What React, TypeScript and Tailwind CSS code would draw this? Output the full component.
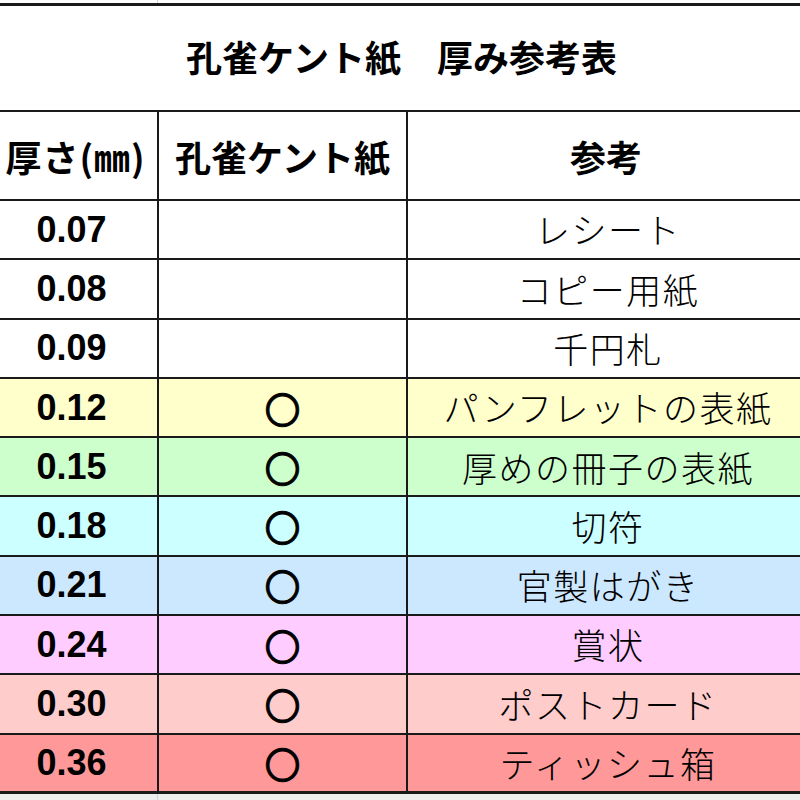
const rows = [
  { t: "0.07", ok: false, note: "レシート", bg: "bg-white" },
  { t: "0.08", ok: false, note: "コピー用紙", bg: "bg-white" },
  { t: "0.09", ok: false, note: "千円札", bg: "bg-white" },
  { t: "0.12", ok: true, note: "パンフレットの表紙", bg: "bg-[#ffffcc]" },
  { t: "0.15", ok: true, note: "厚めの冊子の表紙", bg: "bg-[#ccffcc]" },
  { t: "0.18", ok: true, note: "切符", bg: "bg-[#ccffff]" },
  { t: "0.21", ok: true, note: "官製はがき", bg: "bg-[#cce8ff]" },
  { t: "0.24", ok: true, note: "賞状", bg: "bg-[#ffccff]" },
  { t: "0.30", ok: true, note: "ポストカード", bg: "bg-[#ffcccc]" },
  { t: "0.36", ok: true, note: "ティッシュ箱", bg: "bg-[#ff9999]" },
];

const jp = "font-['Noto_Sans_CJK_JP',sans-serif]";

export default function App() {
  return (
    <div className="w-[800px] h-[800px] overflow-hidden bg-white text-black">
      {/* gridline strip above the table */}
      <div className="h-[3px] flex">
        <div className="w-[158px] border-r border-[#d4d4d4]" />
      </div>

      <div className="-ml-[14px] w-[822px] border-t-[3px] border-[#1a1a1a]">
        <div className={`h-[106px] pl-[9px] pb-[4px] border-b-2 border-[#1a1a1a] flex items-center justify-center text-[36px] font-bold ${jp}`}>
          孔雀ケント紙　厚み参考表
        </div>

        <div className={`grid grid-cols-[173px_249px_1fr] h-[89px] border-b-2 border-[#1a1a1a] text-[36px] font-bold ${jp}`}>
          <div className="flex items-center justify-center pl-[8px] border-r-2 border-[#1a1a1a] tracking-[1px]">厚さ(㎜)</div>
          <div className="flex items-center justify-center border-r-2 border-[#1a1a1a]">孔雀ケント紙</div>
          <div className="flex items-center justify-center pr-[4px]">参考</div>
        </div>

        {rows.map((r, i) => (
          <div
            key={r.t}
            className={`grid grid-cols-[173px_249px_1fr] h-[59.3px] border-[#1a1a1a] ${r.bg} ${
              i === rows.length - 1 ? "border-b-[3px]" : "border-b-2"
            }`}
          >
            <div className="flex items-center justify-center border-r-2 border-[#1a1a1a] font-['Liberation_Sans',sans-serif] font-bold text-[36px]">
              {r.t}
            </div>
            <div className={`flex items-center justify-center border-r-2 border-[#1a1a1a] text-[36px] font-normal [-webkit-text-stroke:0.8px_black] ${jp}`}>
              {r.ok ? "〇" : ""}
            </div>
            <div className={`flex items-center justify-center text-[35px] font-light tracking-[1.5px] text-black ${jp}`}>
              {r.note}
            </div>
          </div>
        ))}
      </div>

      <div className="h-[10px] bg-[#eeeeee] flex">
        <div className="w-[158px] border-r border-[#d4d4d4]" />
      </div>
    </div>
  );
}
